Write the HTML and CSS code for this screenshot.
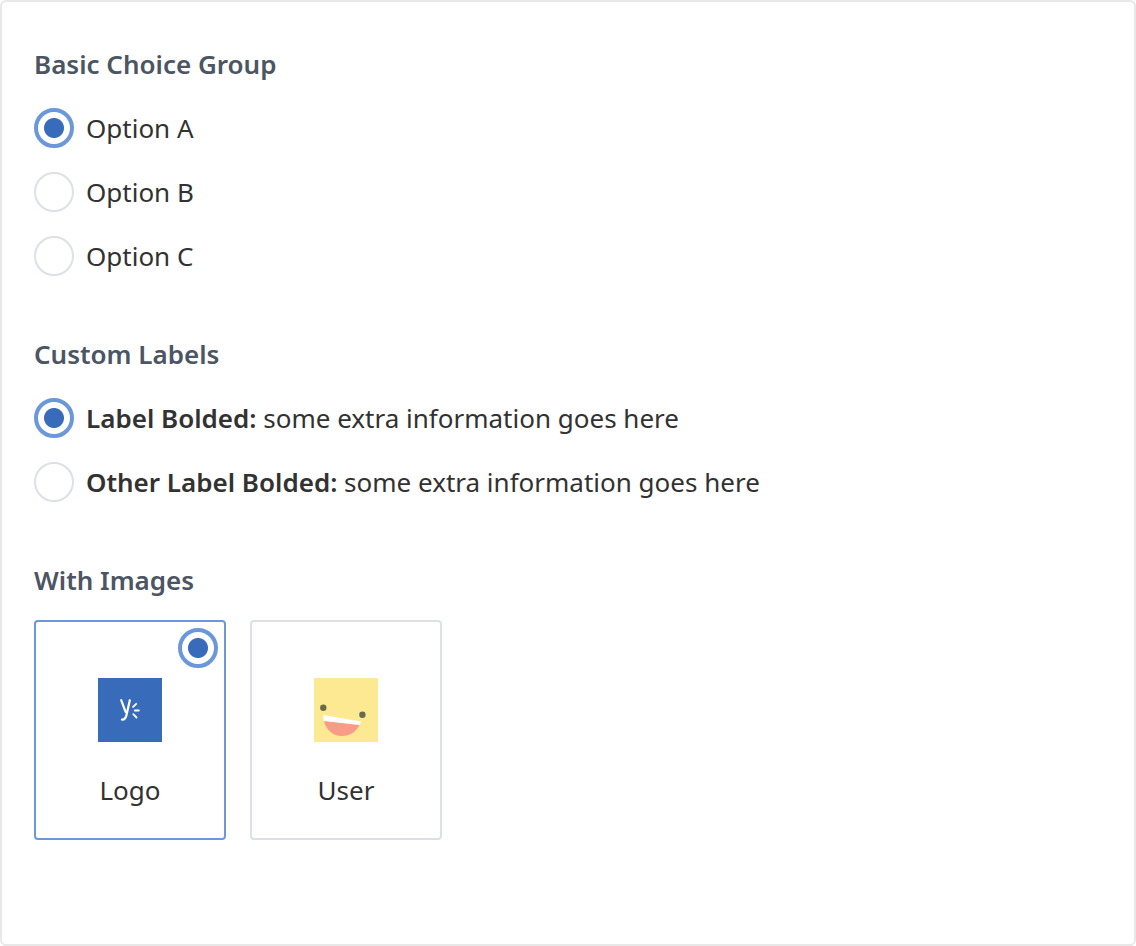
FILE: index.html
```html
<!DOCTYPE html>
<html lang="en">
<head>
<meta charset="utf-8">
<title>Choice Group</title>
<link rel="stylesheet" href="styles.css">
</head>
<body>
<form class="panel">
  <fieldset class="group">
    <legend class="group-title">Basic Choice Group</legend>
    <div class="options">
      <label class="option"><input class="radio" type="radio" name="basic" checked><span>Option A</span></label>
      <label class="option"><input class="radio" type="radio" name="basic"><span>Option B</span></label>
      <label class="option"><input class="radio" type="radio" name="basic"><span>Option C</span></label>
    </div>
  </fieldset>
  <fieldset class="group">
    <legend class="group-title">Custom Labels</legend>
    <div class="options">
      <label class="option"><input class="radio" type="radio" name="custom" checked><span><strong>Label Bolded:</strong> some extra information goes here</span></label>
      <label class="option"><input class="radio" type="radio" name="custom"><span><strong>Other Label Bolded:</strong> some extra information goes here</span></label>
    </div>
  </fieldset>
  <fieldset class="group">
    <legend class="group-title group-title-cards">With Images</legend>
    <div class="cards">
      <label class="card">
        <input class="radio card-radio" type="radio" name="image" checked>
        <svg class="card-image" viewBox="0 0 64 64" aria-hidden="true">
          <rect width="64" height="64" fill="#386cbb"/>
          <g fill="none" stroke="#fff" stroke-linecap="round" stroke-linejoin="round">
            <path d="M23.2 22.2L27.7 34.2M31.8 22.2L28.4 37.4Q27.2 42 24 41.7" stroke-width="2.2"/>
            <path d="M35.1 28.9L38.2 25.8M36.8 32.5H40.8M35.3 36.2L38.5 39.5" stroke-width="1.8"/>
          </g>
        </svg>
        <span>Logo</span>
      </label>
      <label class="card">
        <input class="radio card-radio" type="radio" name="image">
        <svg class="card-image" viewBox="0 0 64 64" aria-hidden="true">
          <rect width="64" height="64" fill="#fee993"/>
          <circle cx="9.3" cy="29.7" r="3.2" fill="#676b4a"/>
          <circle cx="48.4" cy="36.8" r="3.2" fill="#676b4a"/>
          <path d="M9.9 42.8C12 52 19 58.1 28 58.1C36 58.1 42.5 53.5 45.6 46.8Z" fill="#f99c87"/>
          <path d="M9 37.1L47.2 43.4L45.6 47L9.9 42.9Z" fill="#fff"/>
        </svg>
        <span>User</span>
      </label>
    </div>
  </fieldset>
</form>
</body>
</html>
```
FILE: styles.css
```css
* {
  box-sizing: border-box;
}

body {
  margin: 0;
  background: #fff;
  color: #323232;
  font-family: "Segoe UI", "Noto Sans", sans-serif;
  font-size: 26px;
  line-height: 40px;
}

.panel {
  display: flex;
  flex-direction: column;
  gap: 58px;
  min-height: 100vh;
  padding: 42px 32px;
  border: 2px solid #e8e8e8;
  border-radius: 6px;
}

.group {
  min-width: 0;
  margin: 0;
  padding: 0;
  border: 0;
}

.group-title {
  margin-bottom: 24px;
  padding: 0;
  color: #4b5563;
  font-weight: 600;
}

.group-title-cards {
  margin-bottom: 20px;
}

.options {
  display: flex;
  flex-direction: column;
  align-items: flex-start;
  gap: 24px;
}

.option {
  display: flex;
  gap: 12px;
}

strong {
  font-weight: 600;
}

.radio {
  flex: none;
  width: 40px;
  height: 40px;
  margin: 0;
  appearance: none;
  border: 2px solid #dde0e7;
  border-radius: 50%;
  background: #fff;
}

.radio:checked {
  border: 4px solid #6b98da;
  background: radial-gradient(circle, #386cbb 9.5px, #fff 10.5px);
}

.cards {
  display: flex;
  flex-wrap: wrap;
  gap: 24px;
}

.card {
  position: relative;
  display: flex;
  flex-direction: column;
  align-items: center;
  gap: 28px;
  width: 192px;
  padding: 56px 16px 28px;
  border: 2px solid #dde0e7;
  border-radius: 4px;
}

.card:has(.radio:checked) {
  border-color: #6b98da;
}

.card-radio {
  position: absolute;
  top: 6px;
  right: 6px;
}

.card-radio:not(:checked) {
  opacity: 0;
}

.card-image {
  display: block;
  width: 64px;
  height: 64px;
}
```
